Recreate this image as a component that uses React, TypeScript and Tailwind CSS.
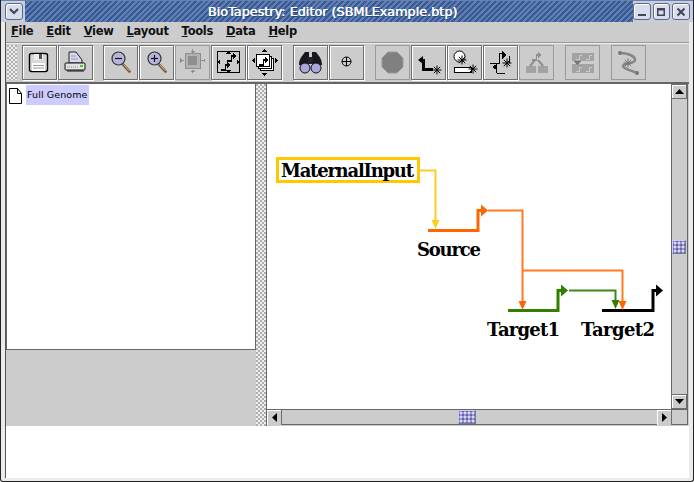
import type { ReactNode } from "react";

const bumps =
  "bg-[repeating-conic-gradient(#f0f0f0_0_25%,#adadad_0_50%)] bg-[length:4px_4px]";
const thumbBumps =
  "border border-[#ccccff] border-r-[#7777aa] border-b-[#7777aa] bg-[#9c9cce] bg-[radial-gradient(#d8d8f8_30%,transparent_40%),radial-gradient(#6666a0_25%,transparent_35%)] bg-[length:4px_4px,4px_4px] bg-[position:0_0,2px_2px]";

function ToolButton({ off, children }: { off?: boolean; children: ReactNode }) {
  return (
    <div
      className={
        off
          ? "w-[35px] h-[35px] shrink-0 border border-[#9a9a9a]"
          : "w-[35px] h-[35px] shrink-0 border border-[#6e6e6e] shadow-[inset_1px_1px_0_#fff,1px_1px_0_#fff]"
      }
    >
      <svg width="33" height="33" viewBox="0 0 33 33" shapeRendering="crispEdges">
        {children}
      </svg>
    </div>
  );
}

function Lens({ plus }: { plus?: boolean }) {
  return (
    <g shapeRendering="auto">
      <path d="M19 18.500l6.500 7" stroke="#7a5a3a" strokeWidth="2.600" strokeLinecap="round" />
      <path d="M19.500 18.500l6 6.500" stroke="#e0b080" strokeWidth="1" />
      <circle cx="14.500" cy="12.500" r="6.500" fill="#b5b5dc" stroke="#333" strokeWidth="1.200" />
      <path d="M11 12.500h7" stroke="#111" strokeWidth="1.200" />
      {plus && <path d="M14.500 9v7" stroke="#111" strokeWidth="1.200" />}
    </g>
  );
}

function Gene({ x, y, c = "#000" }: { x: number; y: number; c?: string }) {
  return <path d={`M${x} ${y}h4v-5h2v-2l3 3-3 3v-2h-1v5h-5z`} fill={c} />;
}

function Spark({ x, y, c = "#000" }: { x: number; y: number; c?: string }) {
  return (
    <g shapeRendering="auto" stroke={c} strokeWidth="1">
      <path d={`M${x - 4.5} ${y}h9M${x} ${y - 4.5}v9M${x - 3.2} ${y - 3.2}l6.4 6.4M${x - 3.2} ${y + 3.2}l6.4-6.4`} />
    </g>
  );
}

const g = "#8f8f8f";

function Toolbar() {
  return (
    <div className="h-[40px] flex items-center pl-px border-t border-[#999] shadow-[inset_0_1px_0_#eee]">
      <div className={`w-[10px] h-[35px] ${bumps}`} />
      <div className="ml-[5px] flex gap-px">
        <ToolButton>
          <g shapeRendering="auto">
            <rect x="6.500" y="7.500" width="18" height="18" rx="2" fill="#d8d8d8" stroke="#000" strokeWidth="1.400" />
            <rect x="11" y="8" width="9" height="6" fill="#eee" />
            <rect x="16" y="8" width="3" height="5" fill="#555" />
            <rect x="9" y="17" width="13" height="8" fill="#fff" />
            <path d="M10 19.500h11M10 22h11" stroke="#999" />
          </g>
        </ToolButton>
        <ToolButton>
          <g shapeRendering="auto">
            <path d="M10 17V6h7l6 8v3z" fill="#d8d8ee" stroke="#222" />
            <path d="M12 10h5M12 13h7" stroke="#9999bb" />
            <rect x="6" y="17" width="20" height="7" rx="1" fill="#e4e4e4" stroke="#111" />
            <path d="M8 21h12" stroke="#888" strokeDasharray="1 1" />
            <rect x="21" y="19" width="3" height="2" fill="#44cc22" />
            <path d="M8 25h17" stroke="#111" />
          </g>
        </ToolButton>
      </div>
      <div className="ml-[10px] flex gap-px">
        <ToolButton><Lens /></ToolButton>
        <ToolButton><Lens plus /></ToolButton>
        <ToolButton off>
          <rect x="9" y="7" width="15" height="15" fill="#b3b3b3" stroke={g} />
          <rect x="12" y="10" width="9" height="9" fill={g} />
          <path d="M16 3h1v3h-1zM16 24h1v3h-1zM5 14v1h3v-1zM25 14v1h3v-1z" fill={g} />
          <path d="M14 5l2.500 2.500L19 5zM14 26l2.500-2.500L19 26zM4 12l2.500 2.500L4 17zM29 12l-2.500 2.500L29 17z" fill={g} />
        </ToolButton>
        <ToolButton>
          <rect x="5.500" y="5.500" width="22" height="21" fill="none" stroke="#000" strokeWidth="1" />
          <Gene x={9} y={23} />
          <Gene x={15} y={14} />
          <path d="M14 8l2.500-3 2.500 3zM14 24l2.500 3 2.500-3zM8 13.500l-3 2.500 3 2.500zM25 13.500l3 2.500-3 2.500z" fill="#000" />
        </ToolButton>
        <ToolButton>
          <g fill="#fff" stroke="#000">
            <rect x="12.500" y="12.500" width="13" height="12" />
            <rect x="10.500" y="10.500" width="13" height="12" />
            <rect x="8.500" y="8.500" width="13" height="12" />
          </g>
          <Gene x={11} y={18} />
          <path d="M14 6l2.500-3 2.500 3zM14 27l2.500 3 2.500-3zM7 12l-3 2.500 3 2.500zM27 12l3 2.500-3 2.500z" fill="#000" />
        </ToolButton>
      </div>
      <div className="ml-[11px] flex gap-px">
        <ToolButton>
          <g shapeRendering="auto">
            <path d="M11 6h4v13H5c0-6 3-9 6-13zM22 6h-4v13h10c0-6-3-9-6-13z" fill="#17171f" />
            <rect x="14" y="11" width="5" height="7" fill="#222" />
            <circle cx="11" cy="22" r="5" fill="#a8a8e0" stroke="#111" />
            <circle cx="22" cy="22" r="5" fill="#a8a8e0" stroke="#111" />
          </g>
        </ToolButton>
        <ToolButton>
          <g shapeRendering="auto" fill="none" stroke="#000">
            <circle cx="16.500" cy="15.500" r="4.500" />
            <path d="M12 15.500h9M16.500 11v9" />
          </g>
        </ToolButton>
      </div>
      <div className="ml-[11px] flex gap-px">
        <ToolButton off>
          <path d="M12 6h9l6 6v9l-6 6h-9l-6-6v-9z" fill="#808080" stroke="#999" strokeWidth="1" shapeRendering="auto" />
        </ToolButton>
        <ToolButton>
          <path d="M6 14l5-4v3h2v9h8v3H10V16h1v2z" fill="#000" shapeRendering="auto" />
          <Spark x={25} y={24} />
        </ToolButton>
        <ToolButton>
          <g shapeRendering="auto">
            <circle cx="11.500" cy="10.500" r="5.500" fill="#fff" stroke="#000" />
            <rect x="6.500" y="21.500" width="17" height="5" fill="#fff" stroke="#000" />
            <Spark x={14} y={14} />
            <Spark x={25} y={23} />
          </g>
        </ToolButton>
        <ToolButton>
          <path d="M6 17h9V7h6v1h-5v10H6z" fill="#000" />
          <path d="M18 5l5 4-5 4zM25 10h1v7h-1zM13 19v8h-1v-8zM13 27h8v1h-8z" fill="#000" />
          <path d="M13 18v6l-5-3z" fill="#000" />
          <Spark x={23} y={17} />
        </ToolButton>
        <ToolButton off>
          <rect x="6" y="20" width="10" height="7" fill="#a3a3a3" />
          <rect x="18" y="20" width="10" height="7" fill="#a3a3a3" />
          <Gene x={12} y={13} c={g} />
          <path d="M15 14l-5 6M18 14l5 6" stroke={g} strokeWidth="2" shapeRendering="auto" />
        </ToolButton>
      </div>
      <div className="ml-[11px]">
        <ToolButton off>
          <rect x="6" y="7" width="22" height="8" fill="#a3a3a3" />
          <rect x="6" y="18" width="22" height="9" fill="#a3a3a3" />
          <path d="M10 13h3V9h3M20 13h3V9h3M10 25h3v-4h3M20 25h3v-4h3" stroke="#c9c9c9" fill="none" />
          <path d="M8 15h7l-3.500 4z" fill="#777" />
        </ToolButton>
      </div>
      <div className="ml-[11px]">
        <ToolButton off>
          <g shapeRendering="auto" fill="none">
            <path d="M8 7c8 0 15 3 15 7s-12 3-12 6 8 4 14 7" stroke="#858585" strokeWidth="2.500" />
            <circle cx="8" cy="7" r="2" fill="#777" />
            <circle cx="25" cy="27" r="2" fill="#777" />
            <Spark x={16} y={17} c="#777" />
          </g>
        </ToolButton>
      </div>
    </div>
  );
}

function Arrow({ x, y, c }: { x: number; y: number; c: string }) {
  // arrowhead pointing down, tip at x,y
  return <path d={`M${x - 4} ${y - 9}h8l-4 9z`} fill={c} />;
}

function Pad({ x, y, w, rise, c }: { x: number; y: number; w: number; rise: number; c: string }) {
  const end = x + w;
  return (
    <g>
      <path d={`M${x} ${y}H${end - 2}V${y - rise}H${end + 2}`} fill="none" stroke={c} strokeWidth="3" />
      <path d={`M${end + 1} ${y - rise - 6}l7 6-7 6z`} fill={c} />
    </g>
  );
}

const labelFont = { fontFamily: "'DejaVu Serif', serif", fontWeight: 700, fontSize: 18 };

function Network() {
  return (
    <svg className="block" width="404" height="325" viewBox="267 84 404 325">
      <rect x="277.500" y="158.500" width="141" height="23" fill="none" stroke="#ffc800" strokeWidth="3" />
      <path d="M420 170.500h15.500V222" fill="none" stroke="#ffcc22" strokeWidth="2" />
      <Arrow x={435.500} y={229} c="#ffcc22" />
      <path d="M488 210.500h34.500V302M522.500 270.500h100V302" fill="none" stroke="#ff7a20" strokeWidth="2" />
      <path d="M569 290.500h46.500V302" fill="none" stroke="#3d8a10" strokeWidth="2" />
      <Pad x={428} y={230.500} w={52} rise={20} c="#ff6600" />
      <Pad x={508} y={310.500} w={52} rise={20} c="#338000" />
      <Pad x={602} y={310.500} w={53} rise={20} c="#000" />
      <Arrow x={522.500} y={310} c="#ff6600" />
      <Arrow x={615.500} y={309} c="#338000" />
      <Arrow x={622.500} y={310} c="#ff6600" />
      <text x="281" y="177" style={labelFont} textLength="133">MaternalInput</text>
      <text x="417" y="256" style={labelFont} textLength="64">Source</text>
      <text x="487" y="336" style={labelFont} textLength="73">Target1</text>
      <text x="581" y="336" style={labelFont} textLength="74">Target2</text>
    </svg>
  );
}

function ScrollBtn({ d, wide }: { d: string; wide?: boolean }) {
  return (
    <div
      className={
        wide
          ? "w-[16px] h-[15px] shrink-0 bg-[#cccccc] border border-[#6e6e6e] shadow-[inset_1px_1px_0_#fff] flex items-center justify-center"
          : "w-[15px] h-[15px] shrink-0 bg-[#cccccc] border-r border-[#6e6e6e] shadow-[inset_1px_1px_0_#fff] flex items-center justify-center"
      }
    >
      <svg width="9" height="9" viewBox="0 0 9 9"><path d={d} fill="#000" /></svg>
    </div>
  );
}

export default function App() {
  return (
    <div className="w-[694px] h-[482px] flex flex-col overflow-hidden bg-[#ebebeb] border-x border-b border-[#222] rounded-b-[3px] font-['DejaVu_Sans',sans-serif]">
      {/* title bar */}
      <div className="-mx-px h-[22px] shrink-0 flex items-stretch bg-[#c4cee4] border-t border-[#6a80ac]">
        <div className="w-[25px] flex items-center justify-center pl-[2px]">
          <div className="w-[18px] h-[17px] rounded-[3px] border border-[#667] bg-[#d5ddee] shadow-[inset_1px_1px_0_#fff] flex items-center justify-center">
            <svg width="10" height="7" viewBox="0 0 10 7"><path d="M1 1l4 4 4-4" fill="none" stroke="#445" strokeWidth="2" /></svg>
          </div>
        </div>
        <div className="flex-1 flex items-center justify-center pl-[7px] bg-[repeating-linear-gradient(135deg,#39598f_0,#39598f_2px,#5f7fb9_2px,#5f7fb9_4px)] text-white text-[12.800px] [text-shadow:0.5px_0_0_#fff,1px_1px_0_#2c4676]">
          BioTapestry: Editor (SBMLExample.btp)
        </div>
        <div className="w-[61px] flex items-center justify-end gap-[2px] pr-[4px]">
          {[
            <path key="a" d="M1 7h8v2H1z" fill="#445" />,
            <path key="b" d="M1 1h8v8H1zM2.500 3.500v4h5v-4z" fill="#445" fillRule="evenodd" />,
            <path key="c" d="M1.500 1.500l7 7M8.500 1.500l-7 7" stroke="#445" strokeWidth="2" />,
          ].map((icon, i) => (
            <div key={i} className="w-[18px] h-[17px] rounded-[3px] border border-[#667] bg-[#d5ddee] shadow-[inset_1px_1px_0_#fff] flex items-center justify-center">
              <svg width="10" height="10" viewBox="0 0 10 10">{icon}</svg>
            </div>
          ))}
        </div>
      </div>

      <div className="flex-1 flex flex-col px-[4px] pb-[3px] min-h-0">
        <div className="bg-white h-full flex flex-col border-l border-[#555]">
          <div className="bg-[#cccccc] flex flex-col shrink-0">
            {/* menu */}
            <div className="h-[20px] flex items-center pl-[5px] text-[11.500px] font-bold text-[#111] tracking-[-0.3px]">
              {["File", "Edit", "View", "Layout", "Tools", "Data", "Help"].map((m) => (
                <span key={m} className="mr-[13px]">
                  <span className="underline">{m[0]}</span>
                  {m.slice(1)}
                </span>
              ))}
            </div>
            <Toolbar />
          </div>

          {/* split pane */}
          <div className="h-[344px] shrink-0 flex bg-[#cccccc] border-t-2 border-[#666] pr-px">
            <div className="w-[250px] flex flex-col shrink-0">
              <div className="h-[266px] bg-white border border-[#666] border-t-0 pt-px">
                <div className="flex items-center h-[20px] pl-px">
                  <svg width="18" height="20" viewBox="0 0 18 20" className="shrink-0">
                    <path d="M1.500 3.500h8l4 5v10h-12z" fill="#fff" stroke="#000" />
                    <path d="M9.500 3.500v5h4" fill="none" stroke="#000" />
                  </svg>
                  <span className="bg-[#ccccff] h-[20px] flex items-center px-px text-[9.500px] tracking-[0.1px] text-black">Full Genome</span>
                </div>
              </div>
            </div>
            <div className={`w-[10px] shrink-0 ${bumps}`} />
            <div className="flex flex-col border-l border-[#666] pb-px">
              <div className="flex flex-1 min-h-0">
                <div className="w-[404px] bg-white shrink-0"><Network /></div>
                <div className="w-[17px] flex flex-col border-r border-[#666] bg-[#cccccc]">
                  <ScrollBtn wide d="M4.500 2L9 7H0z" />
                  <div className="relative flex-1 border-l border-[#666]">
                    <div className={`absolute top-[141px] left-0 w-[14px] h-[14px] ${thumbBumps}`} />
                  </div>
                  <ScrollBtn wide d="M0 2h9L4.500 7z" />
                </div>
              </div>
              <div className="h-[16px] shrink-0 flex border-y border-r border-[#666] bg-[#cccccc]">
                <ScrollBtn d="M7 0v9L2 4.500z" />
                <div className="relative flex-1">
                  <div className={`absolute left-[176px] top-0 w-[18px] h-[14px] ${thumbBumps}`} />
                </div>
                <ScrollBtn d="M2 0v9l5-4.500z" />
                <div className="w-[15px] border-l border-[#cccccc]" />
              </div>
            </div>
          </div>

          <div className="flex-1 bg-white" />
        </div>
      </div>
    </div>
  );
}
